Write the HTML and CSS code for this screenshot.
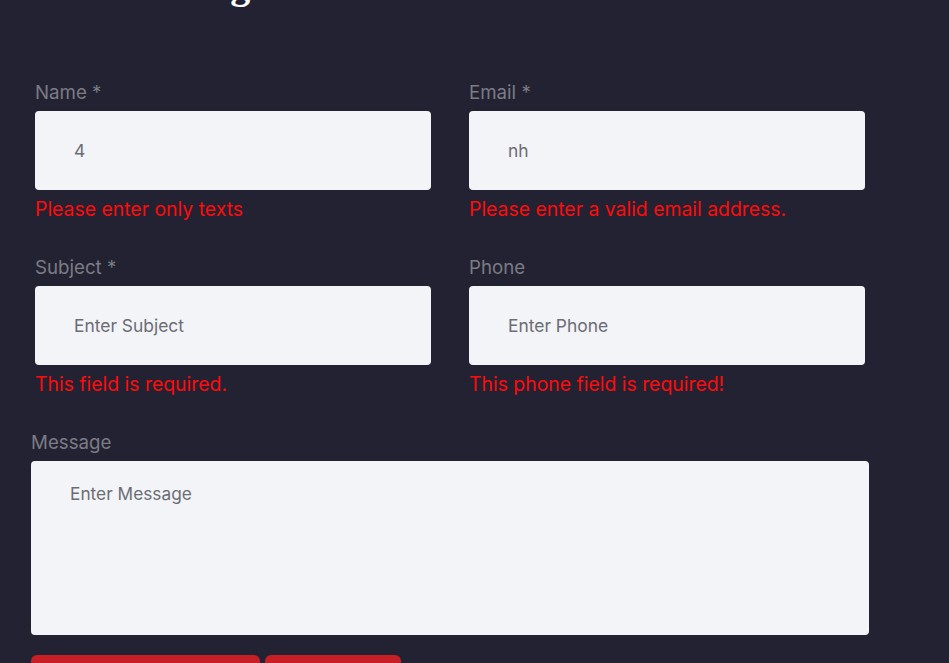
FILE: index.html
```html
<!DOCTYPE html>
<html lang="en">
<head>
<meta charset="utf-8">
<title>Contact</title>
<link rel="stylesheet" href="styles.css">
</head>
<body>
<div class="page">
  <h2 class="title">Send Message</h2>
  <form class="form" novalidate>
    <div class="row">
      <div class="field">
        <label class="label" for="name">Name *</label>
        <input class="input" id="name" type="text" value="4">
        <div class="error">Please enter only texts</div>
      </div>
      <div class="field">
        <label class="label" for="email">Email *</label>
        <input class="input" id="email" type="text" value="nh">
        <div class="error">Please enter a valid email address.</div>
      </div>
    </div>
    <div class="row">
      <div class="field">
        <label class="label" for="subject">Subject *</label>
        <input class="input" id="subject" type="text" placeholder="Enter Subject">
        <div class="error">This field is required.</div>
      </div>
      <div class="field">
        <label class="label" for="phone">Phone</label>
        <input class="input" id="phone" type="text" placeholder="Enter Phone">
        <div class="error">This phone field is required!</div>
      </div>
    </div>
    <div class="message">
      <label class="label" for="msg">Message</label>
      <textarea class="textarea" id="msg" placeholder="Enter Message"></textarea>
    </div>
    <div class="actions">
      <button type="submit" class="btn btn-wide">Send Message</button>
      <button type="reset" class="btn btn-narrow">Reset</button>
    </div>
  </form>
</div>
</body>
</html>
```
FILE: styles.css
```css
html, body {
  margin: 0;
  padding: 0;
  background: #232232;
  overflow: hidden;
}
body {
  font-family: "Inter", "Noto Sans", sans-serif;
}
.page {
  padding: 0 31px;
}
.title {
  margin: -37px 0 0 -2px;
  font-family: "Liberation Serif", serif;
  font-weight: 700;
  font-size: 40px;
  line-height: 44px;
  color: #ffffff;
}
.form {
  width: 838px;
  margin-top: 74px;
}
.row {
  display: grid;
  grid-template-columns: 396px 396px;
  column-gap: 38px;
  padding: 0 4px;
  margin-bottom: 36px;
}
.field {
  display: flex;
  flex-direction: column;
}
.label {
  display: block;
  font-size: 18.7px;
  line-height: 22px;
  padding-top: 1px;
  color: #7b7c85;
  margin-bottom: 7px;
}
.input {
  box-sizing: border-box;
  height: 79px;
  width: 100%;
  border: none;
  border-radius: 4px;
  background: #f3f4f8;
  padding: 0 0 0 39px;
  font-family: inherit;
  font-size: 17.4px;
  color: #6b6d74;
  outline: none;
}
.input::placeholder, .textarea::placeholder {
  color: #6b6d74;
  opacity: 1;
}
.error {
  margin-top: 8px;
  font-size: 19.4px;
  line-height: 22px;
  color: #ff0b0b;
}
.message {
  display: flex;
  flex-direction: column;
}
.textarea {
  box-sizing: border-box;
  height: 174px;
  width: 100%;
  border: none;
  border-radius: 4px;
  background: #f3f4f8;
  padding: 23px 39px;
  font-family: inherit;
  font-size: 17.3px;
  line-height: 20px;
  color: #6b6d74;
  resize: none;
  outline: none;
}
.actions {
  display: flex;
  gap: 5px;
  margin-top: 20px;
}
.btn {
  height: 48px;
  border: none;
  border-radius: 6px;
  background: #c81e26;
  color: #fff;
  font-family: inherit;
  font-size: 17px;
}
.btn-wide { width: 229px; }
.btn-narrow { width: 136px; }
```
